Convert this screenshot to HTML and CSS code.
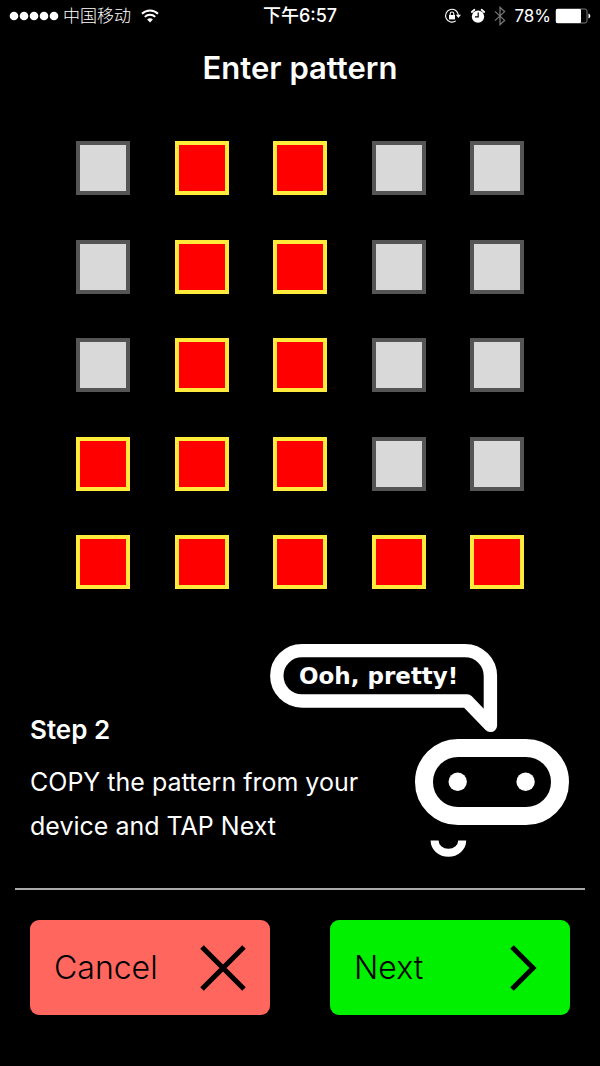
FILE: index.html
```html
<!DOCTYPE html>
<html lang="en">
<head>
    <meta charset="UTF-8">
    <meta name="viewport" content="width=device-width, initial-scale=1">
    <title>Enter pattern</title>
    <link rel="stylesheet" href="styles.css">
</head>
<body>
    <header class="status-bar">
        <div class="status-left">
            <svg class="signal" width="50" height="10" viewBox="0 0 50 10" fill="#fff">
                <circle cx="5" cy="5" r="4.3"/>
                <circle cx="15" cy="5" r="4.3"/>
                <circle cx="25" cy="5" r="4.3"/>
                <circle cx="35" cy="5" r="4.3"/>
                <circle cx="45" cy="5" r="4.3"/>
            </svg>
            <span class="carrier" lang="zh">中国移动</span>
            <svg class="wifi" width="18" height="14" viewBox="0 0 18 14" fill="none" stroke="#fff" stroke-width="2">
                <path d="M1 4.8a11.5 11.5 0 0 1 16 0"/>
                <path d="M3.8 7.9a7.4 7.4 0 0 1 10.4 0"/>
                <path d="M9 13.6L6.1 10.6a4.2 4.2 0 0 1 5.8 0z" fill="#fff" stroke="none"/>
            </svg>
        </div>
        <span class="time" lang="zh">下午6:57</span>
        <div class="status-right">
            <div class="status-icons">
                <svg width="18" height="16" viewBox="0 0 18 16" fill="none" stroke="#fff" stroke-width="1.1">
                    <path d="M11.8 12.9a6.4 6.4 0 1 1 2.6-5.6"/>
                    <path d="M11.8 6.8h5.2l-2.6 3.2z" fill="#fff" stroke="none"/>
                    <rect x="5" y="7" width="6" height="4.4" fill="#fff" stroke="none"/>
                    <path d="M6.2 7.2V5.8a1.8 1.8 0 0 1 3.6 0v1.4"/>
                </svg>
                <svg width="16" height="16" viewBox="0 0 16 16">
                    <circle cx="8" cy="8.6" r="6.2" fill="#fff"/>
                    <path d="M1.8 4l2.6-2.2M14.2 4l-2.6-2.2" stroke="#fff" stroke-width="1.8" stroke-linecap="round"/>
                    <path d="M8.2 4.6v4.2H5" fill="none" stroke="#000" stroke-width="1.2"/>
                </svg>
                <svg width="12" height="20" viewBox="0 0 12 20" fill="none" stroke="#777" stroke-width="1.3">
                    <path d="M1 5.4l9.6 9L6 18.6V1.4l4.6 4.2L1 14.6"/>
                </svg>
            </div>
            <span class="percent">78%</span>
            <svg width="36" height="16" viewBox="0 0 36 16">
                <rect x="1" y="1" width="31" height="14" rx="2" fill="none" stroke="#777"/>
                <rect x="1" y="1" width="25" height="14" rx="1" fill="#fff"/>
                <path d="M33.5 5.5a2.6 2.6 0 0 1 0 5z" fill="#fff"/>
            </svg>
        </div>
    </header>

    <main>
        <h1>Enter pattern</h1>

        <form class="pattern">
            <input type="checkbox" aria-label="Row 1, column 1">
            <input type="checkbox" aria-label="Row 1, column 2" checked>
            <input type="checkbox" aria-label="Row 1, column 3" checked>
            <input type="checkbox" aria-label="Row 1, column 4">
            <input type="checkbox" aria-label="Row 1, column 5">

            <input type="checkbox" aria-label="Row 2, column 1">
            <input type="checkbox" aria-label="Row 2, column 2" checked>
            <input type="checkbox" aria-label="Row 2, column 3" checked>
            <input type="checkbox" aria-label="Row 2, column 4">
            <input type="checkbox" aria-label="Row 2, column 5">

            <input type="checkbox" aria-label="Row 3, column 1">
            <input type="checkbox" aria-label="Row 3, column 2" checked>
            <input type="checkbox" aria-label="Row 3, column 3" checked>
            <input type="checkbox" aria-label="Row 3, column 4">
            <input type="checkbox" aria-label="Row 3, column 5">

            <input type="checkbox" aria-label="Row 4, column 1" checked>
            <input type="checkbox" aria-label="Row 4, column 2" checked>
            <input type="checkbox" aria-label="Row 4, column 3" checked>
            <input type="checkbox" aria-label="Row 4, column 4">
            <input type="checkbox" aria-label="Row 4, column 5">

            <input type="checkbox" aria-label="Row 5, column 1" checked>
            <input type="checkbox" aria-label="Row 5, column 2" checked>
            <input type="checkbox" aria-label="Row 5, column 3" checked>
            <input type="checkbox" aria-label="Row 5, column 4" checked>
            <input type="checkbox" aria-label="Row 5, column 5" checked>
        </form>

        <section class="guide">
            <div class="guide-text">
                <h2>Step 2</h2>
                <p>COPY the pattern from your device and TAP Next</p>
            </div>
            <div class="robot">
                <!-- speech bubble -->
                <svg class="bubble" width="228" height="90" viewBox="0 0 228 90">
                    <path d="M197 58H32A25.2 25.2 0 0 1 32 7.6H195A25.4 25.4 0 0 1 220.4 33V82.4Z" fill="none" stroke="#fff" stroke-width="13.4" stroke-linejoin="round"/>
                    <text x="29" y="41">Ooh, pretty!</text>
                </svg>
                <svg class="face" width="156" height="120" viewBox="0 0 156 120" fill="none" stroke="#fff">
                    <rect x="10" y="10" width="136" height="68" rx="34" stroke-width="18"/>
                    <circle cx="43.7" cy="43.8" r="9.2" fill="#fff" stroke="none"/>
                    <circle cx="111.6" cy="43.8" r="9.2" fill="#fff" stroke="none"/>
                    <path d="M20.6 102.6A13.8 12.2 0 0 0 48.2 102.6" stroke-width="8"/>
                </svg>
            </div>
        </section>
    </main>

    <footer class="actions">
        <button type="button" class="cancel">
            Cancel
            <svg width="46" height="46" viewBox="0 0 46 46" fill="none" stroke="#000" stroke-width="5">
                <path d="M2 2l42 42M44 2L2 44"/>
            </svg>
        </button>
        <button type="button" class="next">
            Next
            <svg width="46" height="46" viewBox="0 0 46 46" fill="none" stroke="#000" stroke-width="5">
                <path d="M12 2l21 21-21 21"/>
            </svg>
        </button>
    </footer>
</body>
</html>
```

FILE: styles.css
```css
* {
    box-sizing: border-box;
}
body {
    margin: 0;
    background: #000;
    color: #fff;
    font-family: Inter, "Noto Sans CJK SC", sans-serif;
}
h1, h2, p {
    margin: 0;
}
svg {
    display: block;
    flex-shrink: 0;
}

/* status bar */
.status-bar {
    display: grid;
    grid-template-columns: 1fr auto 1fr;
    align-items: center;
    height: 32px;
    padding: 0 9px;
    font-size: 17px;
    line-height: 24px;
}
.status-left, .status-right {
    display: flex;
    align-items: center;
    gap: 4px;
}
.status-right {
    justify-content: flex-end;
}
.status-icons {
    display: flex;
    align-items: center;
    gap: 8px;
    margin-right: 4px;
}
.carrier {
    font-weight: 300;
}
.wifi {
    margin-left: 6px;
}
.time {
    font-size: 18px;
    font-weight: 500;
}

h1 {
    padding: 16px;
    text-align: center;
    font-size: 31px;
    line-height: 40px;
    font-weight: 600;
}

/* pattern grid */
.pattern {
    display: grid;
    grid-template-columns: repeat(5, 54px);
    justify-content: space-between;
    align-content: space-between;
    aspect-ratio: 1;
    max-width: 448px;
    margin: 37px auto 0;
}
.pattern input {
    appearance: none;
    width: 54px;
    height: 54px;
    margin: 0;
    background: #d9d9d9;
    border: 4px solid #555;
    cursor: pointer;
}
.pattern input:checked {
    background: #f00;
    border-color: #ffeb3b;
}

/* step text and robot */
.guide {
    display: flex;
    justify-content: space-between;
    align-items: flex-end;
    padding: 125px 30px 30px;
}
.guide-text {
    max-width: 350px;
    padding-bottom: 10px;
}
.guide h2 {
    margin-bottom: 14px;
    font-size: 26px;
    line-height: 32px;
    font-weight: 600;
}
.guide p {
    font-size: 25px;
    line-height: 44px;
}
.robot {
    position: relative;
}
.bubble {
    position: absolute;
    right: 72px;
    bottom: 125px;
}
.bubble text {
    fill: #fff;
    font: bold 23px "DejaVu Sans", sans-serif;
}

/* buttons */
.actions {
    display: grid;
    grid-template-columns: 1fr 1fr;
    gap: 60px;
    margin: 0 15px;
    padding: 30px 15px 50px;
    border-top: 2px solid #aaa;
}
.actions button {
    display: flex;
    justify-content: space-between;
    align-items: center;
    height: 95px;
    padding: 0 24px;
    border: none;
    border-radius: 9px;
    color: #000;
    font-family: inherit;
    font-size: 32px;
    font-weight: 300;
    cursor: pointer;
}
.cancel {
    background: #ff665e;
}
.next {
    background: #00f000;
}
```
